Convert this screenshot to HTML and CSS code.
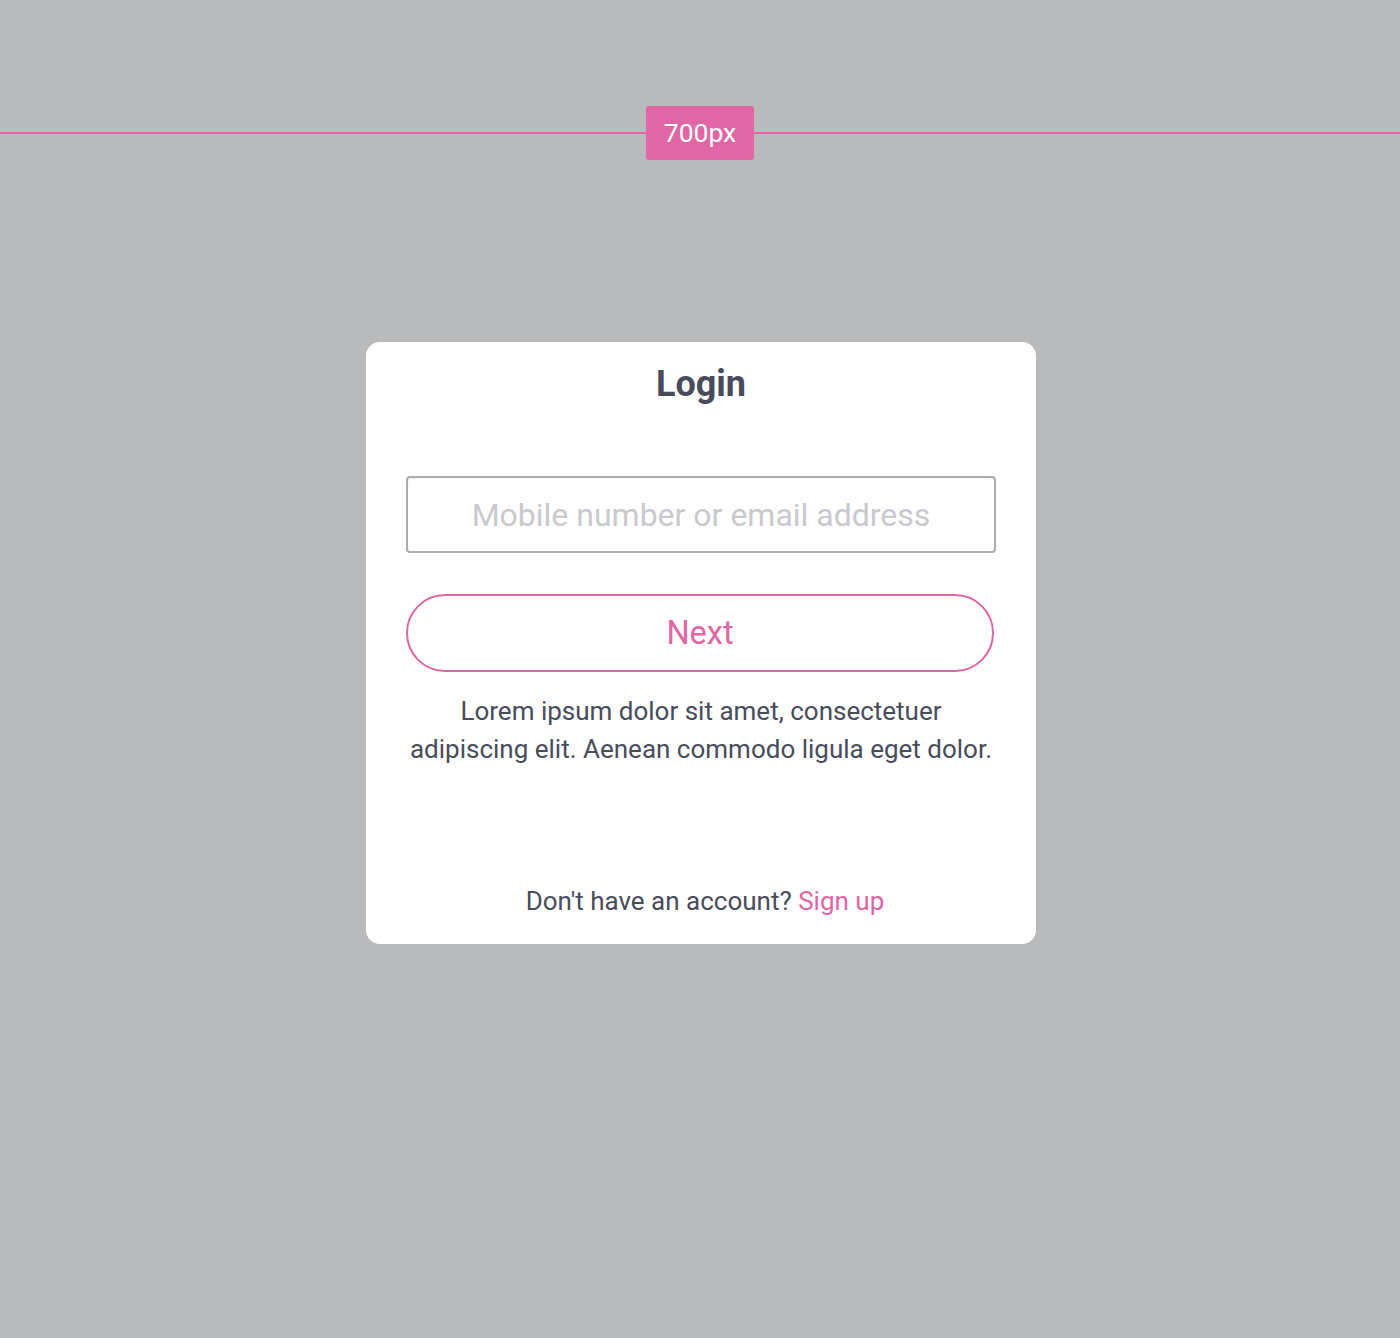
FILE: index.html
```html
<!DOCTYPE html>
<html lang="en">
<head>
<meta charset="utf-8">
<title>Login</title>
<link rel="stylesheet" href="styles.css">
</head>
<body>
  <div class="ruler">
    <span class="ruler-line"></span>
    <span class="ruler-badge">700px</span>
    <span class="ruler-line"></span>
  </div>
  <main class="card">
    <h1 class="title">Login</h1>
    <input class="field" type="text" placeholder="Mobile number or email address">
    <button class="next" type="button">Next</button>
    <p class="info">Lorem ipsum dolor sit amet, consectetuer adipiscing elit. Aenean commodo ligula eget dolor.</p>
    <p class="footer">Don't have an account? <a class="signup" href="#">Sign up</a></p>
  </main>
</body>
</html>
```
FILE: styles.css
```css
html, body {
  margin: 0;
  padding: 0;
}
body {
  background: #b9babc;
  font-family: Roboto, "Liberation Sans", sans-serif;
  color: #484c5c;
  min-height: 1338px;
}
.ruler {
  display: flex;
  align-items: center;
  margin-top: 106px;
  height: 54px;
}
.ruler-line {
  flex: 1;
  height: 2px;
  margin-top: -1px;
  background: #e066a5;
}
.ruler-badge {
  width: 108px;
  height: 54px;
  box-sizing: border-box;
  background: #e066a5;
  color: #fff;
  border-radius: 3px;
  font-size: 26.5px;
  line-height: 54px;
  text-align: center;
}
.card {
  width: 670px;
  box-sizing: border-box;
  margin: 182px 0 0 calc(50% - 334px);
  background: #fff;
  border-radius: 14px;
  padding: 22px 40px 24px;
  display: flex;
  flex-direction: column;
  align-items: stretch;
  text-align: center;
}
.title {
  margin: 0;
  font-size: 36px;
  line-height: 40px;
  font-weight: 700;
  color: #474b5b;
}
.field {
  margin-top: 72px;
  height: 77px;
  box-sizing: border-box;
  border: 2px solid #adadb0;
  border-radius: 4px;
  font-family: Roboto, "Liberation Sans", sans-serif;
  font-size: 32px;
  text-align: center;
  color: #484c5c;
  padding: 0 12px;
  outline: none;
  box-shadow: inset 0 1px 2px rgba(0,0,0,0.06);
}
.field::placeholder {
  color: #c9c9ce;
}
.next {
  margin-top: 41px;
  width: 588px;
  height: 78px;
  box-sizing: border-box;
  border: 2px solid #e066a5;
  border-radius: 39px;
  background: #fff;
  color: #e066a5;
  font-family: Roboto, "Liberation Sans", sans-serif;
  font-size: 32.5px;
  cursor: pointer;
}
.info {
  margin: 20px 0 0;
  font-size: 26px;
  line-height: 38px;
  color: #484c5c;
}
.footer {
  margin: 114px 0 0;
  padding-left: 8px;
  font-size: 26px;
  line-height: 38px;
  color: #484c5c;
}
.signup {
  color: #e066a5;
  text-decoration: none;
}
```
